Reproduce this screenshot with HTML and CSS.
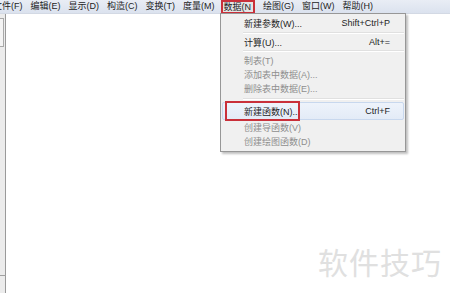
FILE: index.html
```html
<!DOCTYPE html>
<html lang="zh-CN">

<head>
    <meta charset="UTF-8">
    <title>几何画板 - 数据菜单</title>
    <link rel="stylesheet" href="styles.css">
</head>

<body>
    <div class="app">
        <div class="menubar">
            <span class="menuItem first">文件(F)</span>
            <span class="menuItem">编辑(E)</span>
            <span class="menuItem">显示(D)</span>
            <span class="menuItem">构造(C)</span>
            <span class="menuItem">变换(T)</span>
            <span class="menuItem">度量(M)</span>
            <span class="menuItem open">数据(N</span>
            <span class="menuItem">绘图(G)</span>
            <span class="menuItem">窗口(W)</span>
            <span class="menuItem">帮助(H)</span>
        </div>
        <div class="main">
            <div class="sidebar">
                <div class="toolBox"></div>
                <div class="sideLine"></div>
            </div>
            <div class="canvas">
                <div class="watermark">软件技巧</div>
            </div>
        </div>

        <div class="dropdown">
            <div class="row"><span>新建参数(W)...</span><span class="key">Shift+Ctrl+P</span></div>
            <div class="sep wide"></div>
            <div class="row"><span>计算(U)...</span><span class="key">Alt+=</span></div>
            <div class="sep"></div>
            <div class="row off"><span>制表(T)</span></div>
            <div class="row off"><span>添加表中数据(A)...</span></div>
            <div class="row off"><span>删除表中数据(E)...</span></div>
            <div class="sep tall"></div>
            <div class="row hover"><span>新建函数(N)...</span><span class="key">Ctrl+F</span><div class="mark"></div></div>
            <div class="row off"><span>创建导函数(V)</span></div>
            <div class="row off"><span>创建绘图函数(D)</span></div>
        </div>
    </div>
</body>

</html>
```

FILE: styles.css
```css
html, body {
    margin: 0;
    padding: 0;
    width: 100%;
    height: 100%;
    background: #ffffff;
    overflow: hidden;
}
.app {
    position: relative;
    width: 450px;
    height: 293px;
    display: flex;
    flex-direction: column;
    font-family: "Liberation Sans", "Noto Sans CJK SC", sans-serif;
    font-size: 9px;
    color: #1e1e1e;
}
.menubar {
    height: 13px;
    display: flex;
    align-items: center;
    gap: 8px;
    background: linear-gradient(#e9edf5, #dbe2ee);
    border-bottom: 1px solid #d3d9e4;
    white-space: nowrap;
    overflow: hidden;
}
.menuItem {
    line-height: 13px;
}
.menuItem.first {
    margin-left: -7px;
}
.menuItem.open {
    margin-left: -2px;
    padding: 0 2px 0 1px;
    border: 2px solid #c9303a;
    line-height: 10px;
    background: #e4e4e4;
}
.main {
    flex: 1;
    display: flex;
}
.sidebar {
    width: 5px;
    background: #ececec;
    border-right: 1px solid #9a9a9a;
    display: flex;
    flex-direction: column;
}
.toolBox {
    margin-top: 4px;
    height: 27px;
    width: 3px;
    border: 1px solid #a9a9a9;
    border-left: none;
    background: #f4f4f4;
}
.sideLine {
    margin-top: auto;
    margin-bottom: 17px;
    height: 1px;
    width: 8px;
    background: #a0a0a0;
}
.canvas {
    flex: 1;
    position: relative;
    background: #ffffff;
}
.watermark {
    position: absolute;
    right: 8px;
    bottom: 10px;
    font-family: "Noto Sans CJK SC", sans-serif;
    font-size: 30px;
    color: #e0e0e0;
    letter-spacing: 1px;
}
.dropdown {
    position: absolute;
    left: 220px;
    top: 13px;
    width: 184px;
    padding: 2px 0 3px 0;
    background: #f0f0f0;
    border: 1px solid #979797;
    box-shadow: 2px 2px 2px rgba(0, 0, 0, 0.25);
}
.row {
    position: relative;
    height: 14px;
    display: flex;
    align-items: center;
    justify-content: space-between;
    padding: 0 14px 0 22px;
    margin: 0 1px;
}
.row.off {
    color: #8e8e8e;
}
.row.hover {
    height: 16px;
    background: linear-gradient(#eef3fb, #e3ebf7);
    border: 1px solid #c8d8ee;
    border-radius: 2px;
    padding: 0 13px 0 21px;
}
.key {
    text-align: right;
}
.mark {
    position: absolute;
    left: 2px;
    top: -2px;
    width: 71px;
    height: 16px;
    border: 2px solid #c9303a;
}
.sep {
    height: 1px;
    margin: 1px 1px 1px 22px;
    background: #e0e0e0;
    border-bottom: 1px solid #ffffff;
}
.sep.wide {
    margin: 2px 1px 1px 22px;
}
.sep.tall {
    margin: 3px 1px 2px 22px;
}
```
